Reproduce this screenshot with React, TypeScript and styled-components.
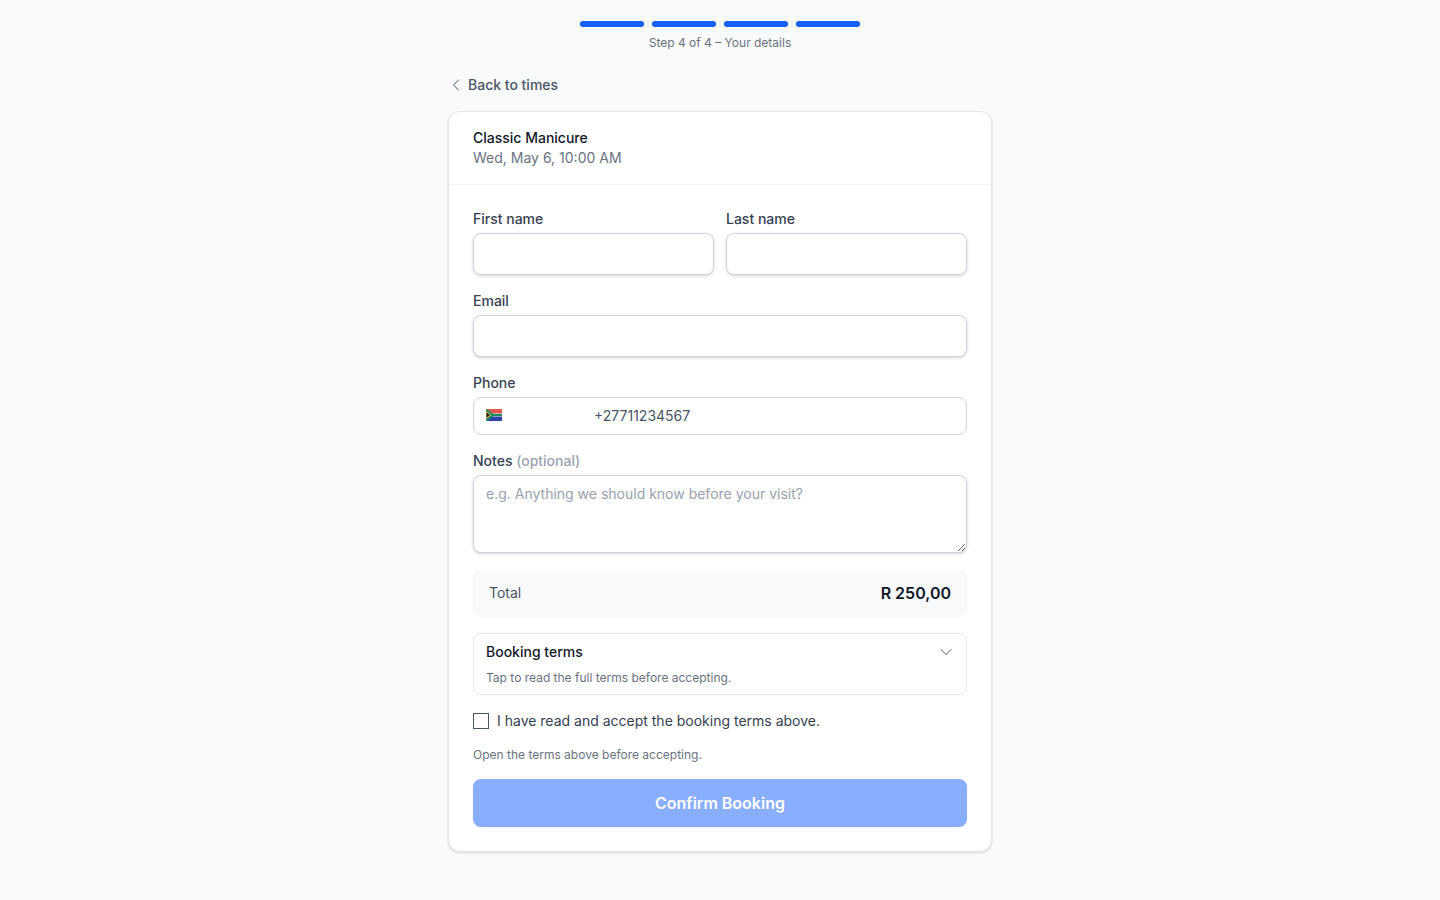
import React from "react";
import styled, { createGlobalStyle } from "styled-components";

const Global = createGlobalStyle`
  * { box-sizing: border-box; }
  html, body { margin: 0; padding: 0; background: #f9fafb; }
  body { font-family: Inter, "Noto Sans", sans-serif; color: #111827; }
`;

const Page = styled.div`
  width: 544px;
  margin: 0 auto;
  padding: 21px 0 48px;
  display: flex;
  flex-direction: column;
  min-height: 900px;
`;
const Progress = styled.div`
  display: flex;
  flex-direction: column;
  align-items: center;
  gap: 8px;
  margin-bottom: 24px;
`;
const Bars = styled.div`
  display: flex;
  gap: 8px;
`;
const Bar = styled.div`
  width: 64px;
  height: 6px;
  border-radius: 999px;
  background: #155dfc;
`;
const Caption = styled.div`
  font-size: 12px;
  line-height: 16px;
  color: #6a7282;
`;
const BackLink = styled.a`
  display: flex;
  align-items: center;
  gap: 4px;
  height: 20px;
  margin-bottom: 16px;
  font-size: 14px;
  line-height: 20px;
  font-weight: 450;
  color: #4a5565;
`;
const Card = styled.div`
  background: #fff;
  border: 1px solid #e5e7eb;
  border-radius: 12px;
  box-shadow: 0 1px 3px rgba(0, 0, 0, 0.1), 0 1px 2px rgba(0, 0, 0, 0.06);
`;
const Summary = styled.div`
  padding: 16px 24px;
  height: 73px;
  border-bottom: 1px solid #f3f4f6;
`;
const ServiceName = styled.div`
  font-size: 14px;
  line-height: 20px;
  font-weight: 500;
  color: #101828;
`;
const ServiceTime = styled.div`
  font-size: 14px;
  line-height: 20px;
  color: #6a7282;
`;
const Form = styled.form`
  padding: 24px;
  display: flex;
  flex-direction: column;
  gap: 16px;
`;
const NameRow = styled.div`
  display: grid;
  grid-template-columns: 1fr 1fr;
  gap: 12px;
`;
const Field = styled.div`
  display: flex;
  flex-direction: column;
  gap: 4px;
`;
const Label = styled.label`
  font-size: 14px;
  line-height: 20px;
  font-weight: 450;
  color: #364153;
`;
const Optional = styled.span`
  color: #99a1af;
  font-weight: 450;
`;
const TextInput = styled.input`
  height: 42px;
  width: 100%;
  padding: 0 12px;
  background: #fff;
  border: 1px solid #d1d5dc;
  border-radius: 8px;
  box-shadow: 0 1px 3px rgba(0, 0, 0, 0.18);
  font: 400 14px Inter, sans-serif;
  outline: none;
`;
const PhoneBox = styled.div`
  height: 38px;
  display: flex;
  align-items: center;
  padding: 0 12px;
  background: #fff;
  border: 1px solid #d1d5dc;
  border-radius: 8px;
`;
const Flag = styled.svg`
  width: 16px;
  height: 12px;
  flex: none;
  margin-top: -2px;
  margin-right: 92px;
`;
const PhoneInput = styled.input`
  flex: 1;
  min-width: 0;
  height: 20px;
  margin-top: -1px;
  border: 0;
  padding: 0;
  outline: none;
  background: transparent;
  font: 400 14px/20px Inter, sans-serif;
  color: #4a5565;
`;
const Notes = styled.textarea`
  display: block;
  width: 100%;
  height: 78px;
  padding: 8px 12px;
  background: #fff;
  border: 1px solid #d1d5dc;
  border-radius: 8px;
  box-shadow: 0 1px 3px rgba(0, 0, 0, 0.18);
  font: 400 14px/20px Inter, sans-serif;
  outline: none;
  resize: vertical;
  &::placeholder { color: #99a1af; opacity: 1; }
`;
const TotalRow = styled.div`
  height: 48px;
  padding: 0 16px;
  display: flex;
  align-items: center;
  justify-content: space-between;
  background: #f9fafb;
  border-radius: 8px;
`;
const TotalLabel = styled.span`
  font-size: 14px;
  line-height: 20px;
  margin-top: -1px;
  color: #4a5565;
`;
const TotalValue = styled.span`
  font-size: 16px;
  font-weight: 600;
  color: #101828;
`;
const Terms = styled.div`
  height: 62px;
  padding: 8px 12px;
  border: 1px solid #e5e7eb;
  border-radius: 8px;
`;
const TermsHead = styled.div`
  display: flex;
  align-items: center;
  justify-content: space-between;
  height: 20px;
  margin-bottom: 8px;
  font-size: 14px;
  line-height: 20px;
  font-weight: 500;
  color: #101828;
  svg { color: #4a5565; }
`;
const TermsHint = styled.div`
  font-size: 12px;
  line-height: 16px;
  color: #6a7282;
`;
const Accept = styled.label`
  display: flex;
  align-items: center;
  gap: 8px;
  height: 20px;
  font-size: 14px;
  line-height: 20px;
  color: #364153;
`;
const Box = styled.input`
  appearance: none;
  width: 16px;
  height: 16px;
  margin: 0;
  flex: none;
  background: #fff;
  border: 1px solid #4b5563;
  border-radius: 0;
`;
const Hint = styled.div`
  font-size: 12px;
  line-height: 16px;
  color: #6a7282;
`;
const Confirm = styled.button`
  height: 48px;
  width: 100%;
  border: 0;
  border-radius: 8px;
  background: #8aaefe;
  color: #fff;
  box-shadow: 0 1px 2px rgba(0, 0, 0, 0.05);
  font: 600 16px Inter, sans-serif;
`;

export default function App() {
  return (
    <>
      <Global />
      <Page>
        <Progress>
          <Bars>
            {[0, 1, 2, 3].map((i) => (
              <Bar key={i} />
            ))}
          </Bars>
          <Caption>Step 4 of 4 – Your details</Caption>
        </Progress>
        <BackLink>
          <svg width="16" height="16" viewBox="0 0 24 24" fill="none" stroke="currentColor" strokeWidth="1.5" strokeLinecap="round" strokeLinejoin="round">
            <path d="M15.75 19.5 8.25 12l7.5-7.5" />
          </svg>
          Back to times
        </BackLink>
        <Card>
          <Summary>
            <ServiceName>Classic Manicure</ServiceName>
            <ServiceTime>Wed, May 6, 10:00 AM</ServiceTime>
          </Summary>
          <Form>
            <NameRow>
              <Field>
                <Label>First name</Label>
                <TextInput type="text" />
              </Field>
              <Field>
                <Label>Last name</Label>
                <TextInput type="text" />
              </Field>
            </NameRow>
            <Field>
              <Label>Email</Label>
              <TextInput type="email" />
            </Field>
            <Field>
              <Label>Phone</Label>
              <PhoneBox>
                <Flag viewBox="0 0 18 12" preserveAspectRatio="none">
                  <rect width="18" height="4.5" fill="#e0574f" />
                  <rect y="7.5" width="18" height="4.5" fill="#2b44a5" />
                  <path d="M0 0 8 5H18V7H8L0 12Z" fill="#fff" />
                  <path d="M0 1 8 6 0 11M8 6H18" fill="none" stroke="#1c8a5f" strokeWidth="2.2" />
                  <path d="M0 2.6 5.4 6 0 9.4Z" fill="#1a1a1a" stroke="#f5bf3a" strokeWidth="0.9" />
                </Flag>
                <PhoneInput defaultValue="+27711234567" />
              </PhoneBox>
            </Field>
            <Field>
              <Label>
                Notes <Optional>(optional)</Optional>
              </Label>
              <Notes placeholder="e.g. Anything we should know before your visit?" />
            </Field>
            <TotalRow>
              <TotalLabel>Total</TotalLabel>
              <TotalValue>R 250,00</TotalValue>
            </TotalRow>
            <Terms>
              <TermsHead>
                Booking terms
                <svg width="16" height="16" viewBox="0 0 24 24" fill="none" stroke="currentColor" strokeWidth="1.5" strokeLinecap="round" strokeLinejoin="round">
                  <path d="m19.5 8.25-7.5 7.5-7.5-7.5" />
                </svg>
              </TermsHead>
              <TermsHint>Tap to read the full terms before accepting.</TermsHint>
            </Terms>
            <Accept>
              <Box type="checkbox" />
              I have read and accept the booking terms above.
            </Accept>
            <Hint>Open the terms above before accepting.</Hint>
            <Confirm type="button">Confirm Booking</Confirm>
          </Form>
        </Card>
      </Page>
    </>
  );
}
